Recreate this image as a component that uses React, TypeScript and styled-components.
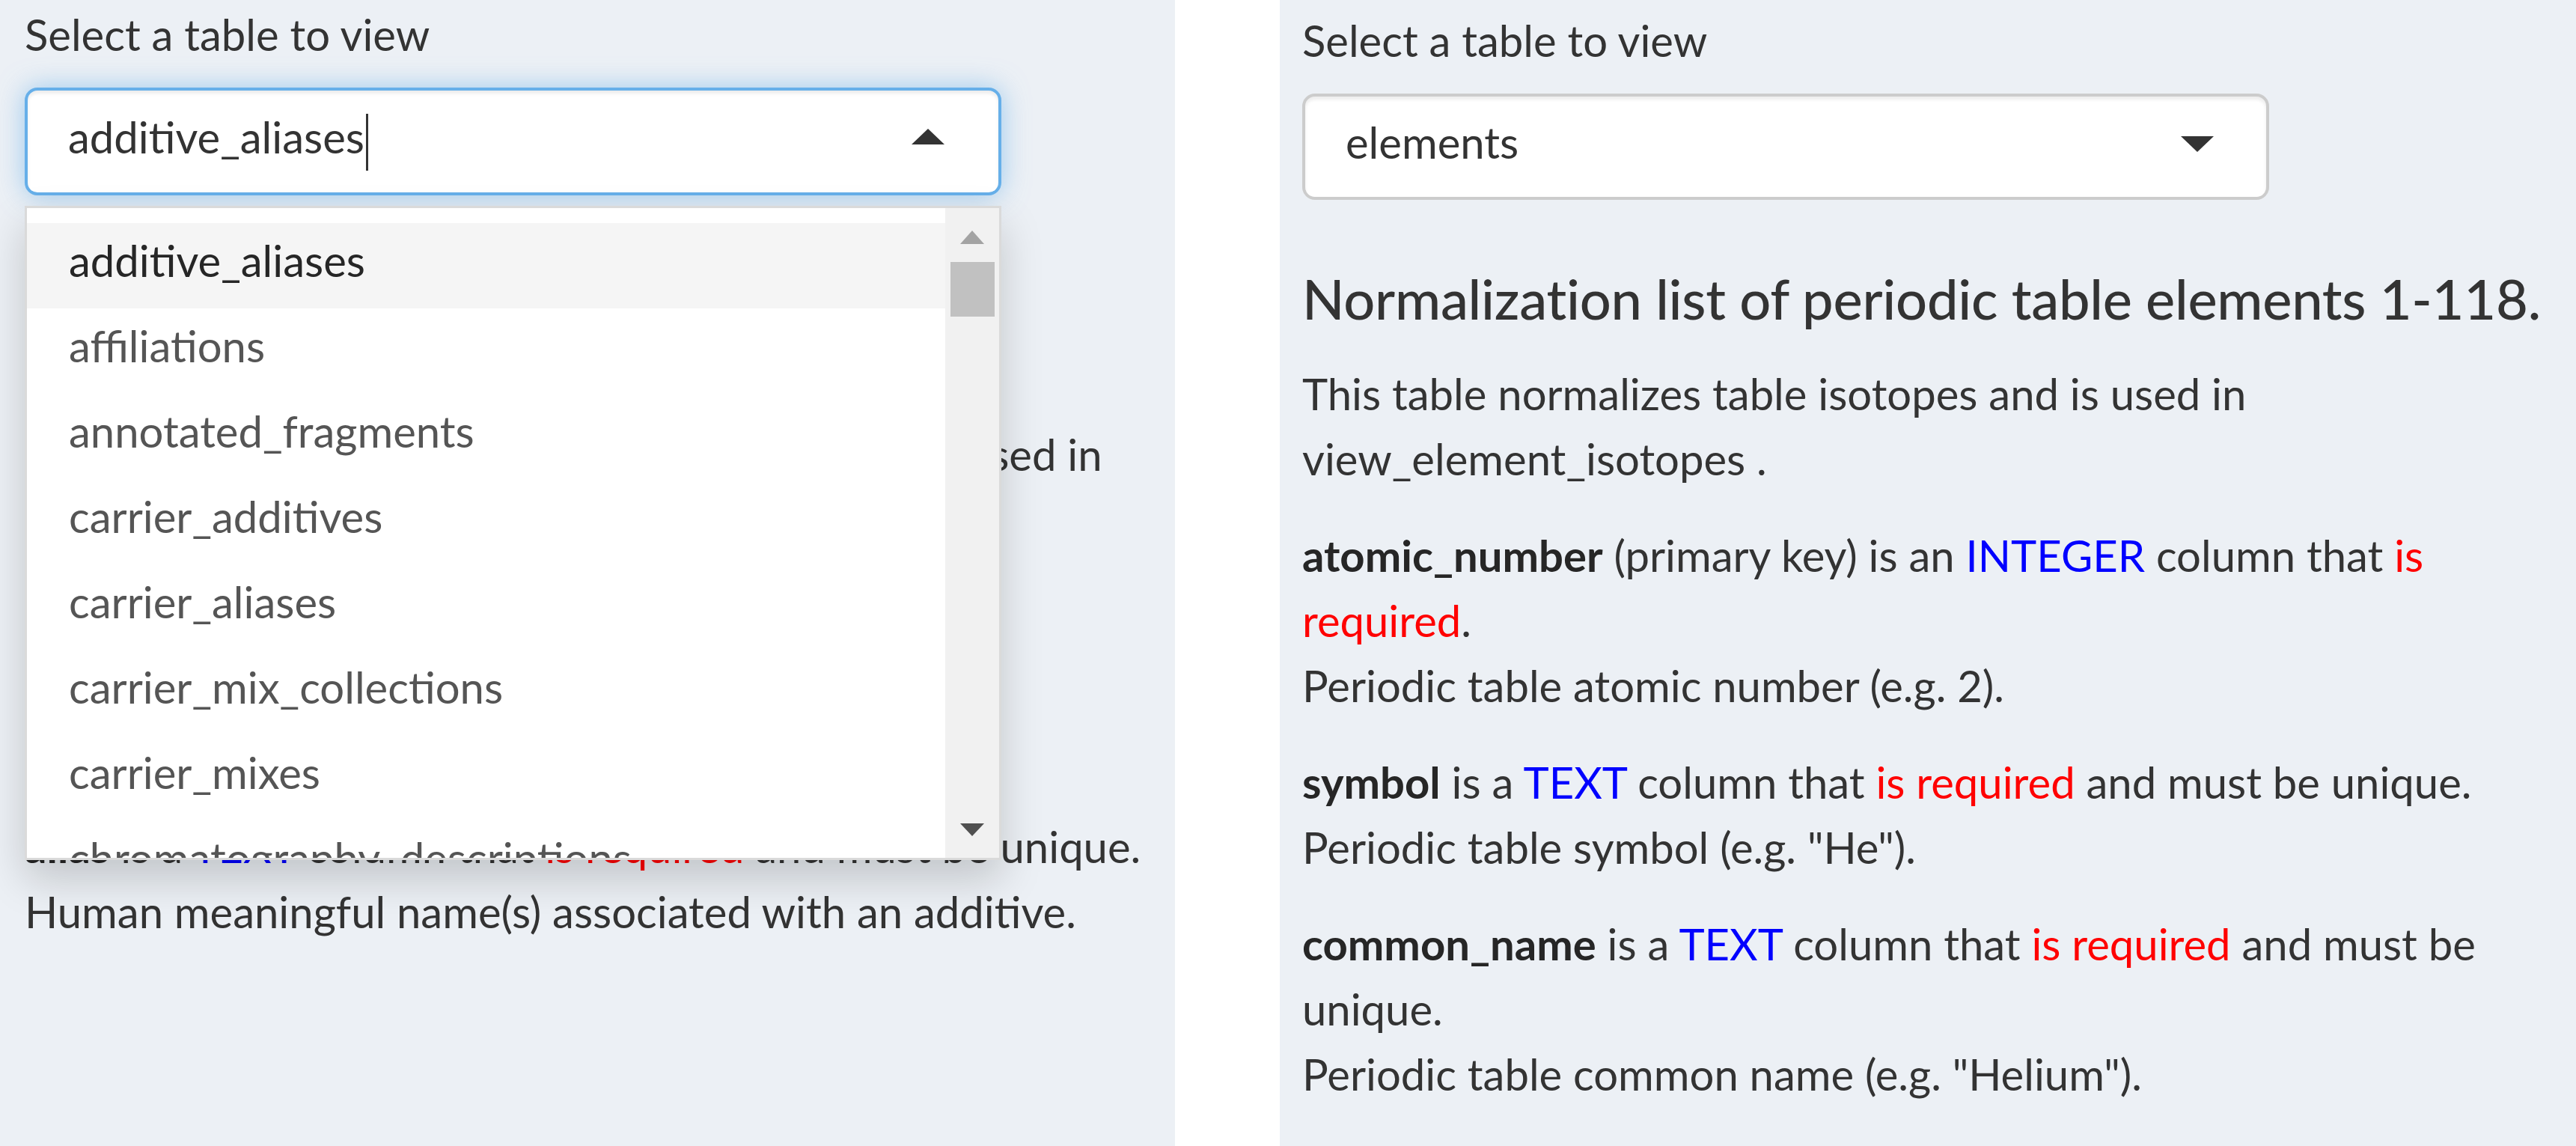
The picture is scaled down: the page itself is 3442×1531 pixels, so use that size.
import React from "react";
import styled, { createGlobalStyle, css } from "styled-components";

const GlobalStyle = createGlobalStyle`
  html, body {
    margin: 0;
    padding: 0;
    background: #ffffff;
  }
  body {
    font-family: Lato, "Open Sans", "Liberation Sans", sans-serif;
    color: #333333;
  }
  *, *::before, *::after { box-sizing: border-box; }
`;

const Page = styled.main`
  display: flex;
  width: 3442px;
  height: 1531px;
  overflow: hidden;
  background: #ffffff;
`;

const Panel = styled.section<{ $width?: number; $top: number; $left: number }>`
  flex: ${({ $width }) => ($width ? `0 0 ${$width}px` : "1 1 0")};
  min-width: 0;
  height: 100%;
  background: #ecf0f5;
  padding: ${({ $top, $left }) => `${$top}px 0 0 ${$left}px`};
  overflow: hidden;
`;

const Gutter = styled.div`
  flex: 0 0 140px;
  background: #ffffff;
`;

const Column = styled.div<{ $width: number }>`
  width: ${({ $width }) => $width}px;
  font-size: 58px;
  line-height: 87px;
`;

const FieldLabel = styled.label`
  display: block;
  font-size: 58px;
  line-height: 87px;
  font-weight: 400;
  color: #333333;
  margin-bottom: 28px;
`;

const SelectWrap = styled.div<{ $width: number }>`
  position: relative;
  width: ${({ $width }) => $width}px;
`;

const SelectBox = styled.div<{ $open?: boolean; $height: number; $padTop: number }>`
  position: relative;
  height: ${({ $height }) => $height}px;
  padding: ${({ $padTop }) => $padTop}px 0 0 54px;
  background: #ffffff;
  border: 4px solid ${({ $open }) => ($open ? "#66afe9" : "#cccccc")};
  border-radius: 17px;
  font-size: 58px;
  line-height: 87px;
  color: #333333;
  white-space: nowrap;
  box-shadow: ${({ $open }) =>
    $open
      ? "inset 0 4px 4px rgba(0,0,0,0.075), 0 0 35px rgba(102,175,233,0.6)"
      : "inset 0 4px 4px rgba(0,0,0,0.075)"};
`;

const TextCaret = styled.span`
  display: inline-block;
  width: 3px;
  height: 76px;
  margin-left: 2px;
  vertical-align: -23px;
  background: #333333;
`;

const Arrow = styled.span<{ $up?: boolean; $top: number; $right: number }>`
  position: absolute;
  top: ${({ $top }) => $top}px;
  right: ${({ $right }) => $right}px;
  width: 0;
  height: 0;
  border-left: 22px solid transparent;
  border-right: 22px solid transparent;
  ${({ $up }) =>
    $up
      ? css`border-bottom: 21px solid #333333;`
      : css`border-top: 21px solid #333333;`}
`;

const Dropdown = styled.div`
  position: absolute;
  top: calc(100% + 14px);
  left: 0;
  width: 100%;
  height: 874px;
  display: flex;
  background: #ffffff;
  border: 3px solid #dadada;
  box-shadow: 0 26px 52px rgba(0, 0, 0, 0.175);
  z-index: 10;
`;

const OptionList = styled.ul`
  flex: 1 1 auto;
  min-width: 0;
  margin: 0;
  padding: 20px 0 0;
  list-style: none;
  overflow: hidden;
`;

const Option = styled.li<{ $active?: boolean }>`
  height: 114px;
  padding: 6px 0 0 56px;
  font-size: 58px;
  line-height: 87px;
  white-space: nowrap;
  color: ${({ $active }) => ($active ? "#262626" : "#555555")};
  background: ${({ $active }) => ($active ? "#f5f5f5" : "#ffffff")};
`;

const ScrollTrack = styled.div`
  flex: 0 0 72px;
  display: flex;
  flex-direction: column;
  align-items: center;
  padding: 30px 0 29px;
  background: #f1f1f1;
`;

const ScrollButton = styled.span<{ $dir: "up" | "down"; $color: string }>`
  flex: 0 0 auto;
  width: 0;
  height: 0;
  border-left: 16px solid transparent;
  border-right: 16px solid transparent;
  ${({ $dir, $color }) =>
    $dir === "up"
      ? css`border-bottom: 18px solid ${$color};`
      : css`border-top: 17px solid ${$color};`}
`;

const ScrollThumb = styled.span`
  flex: 0 0 73px;
  width: 59px;
  margin-top: 24px;
  background: #c1c1c1;
`;

const ScrollSpacer = styled.span`
  flex: 1 1 auto;
`;

const Heading = styled.h4`
  margin: 88px 0 40px;
  font-size: 74px;
  line-height: 87px;
  font-weight: 500;
  letter-spacing: -0.25px;
  color: #333333;
`;

const Para = styled.p<{ $after?: number }>`
  margin: 0 0 ${({ $after }) => $after ?? 42}px;
  font-size: 58px;
  line-height: 87px;
  color: #333333;
`;

const ColName = styled.b`
  font-weight: 700;
  color: #262626;
`;

const TypeName = styled.span`
  color: #0000ff;
`;

const Required = styled.span`
  color: #ff0000;
`;

const tables = [
  "additive_aliases",
  "affiliations",
  "annotated_fragments",
  "carrier_additives",
  "carrier_aliases",
  "carrier_mix_collections",
  "carrier_mixes",
  "chromatography_descriptions",
  "compound_aliases",
];

export default function App() {
  return (
    <>
      <GlobalStyle />
      <Page>
        <Panel $width={1570} $top={2} $left={33}>
          <Column $width={1530}>
            <FieldLabel>Select a table to view</FieldLabel>
            <SelectWrap $width={1305}>
              <SelectBox $open $height={144} $padTop={18}>
                additive_aliases
                <TextCaret />
                <Arrow $up $top={51} $right={72} />
              </SelectBox>
              <Dropdown>
                <OptionList>
                  {tables.map((t, i) => (
                    <Option key={t} $active={i === 0}>
                      {t}
                    </Option>
                  ))}
                </OptionList>
                <ScrollTrack>
                  <ScrollButton $dir="up" $color="#a3a3a3" />
                  <ScrollThumb />
                  <ScrollSpacer />
                  <ScrollButton $dir="down" $color="#505050" />
                </ScrollTrack>
              </Dropdown>
            </SelectWrap>
            <Heading>
              Alternate names for additives,
              <br />
              one alias per additive name.
            </Heading>
            <Para>
              This table links all aliases to table additives and is used in view_additive_aliases .
            </Para>
            <Para $after={47}>
              <ColName>id</ColName> is an <TypeName>INTEGER</TypeName> column that{" "}
              <Required>is required</Required>.
              <br />
              Automatically assigned primary key
              <br />
              for each alias.
            </Para>
            <Para>
              <ColName>alias</ColName> is a <TypeName>TEXT</TypeName> column that{" "}
              <Required>is required</Required> and must be unique.
              <br />
              Human meaningful name(s) associated with an additive.
            </Para>
          </Column>
        </Panel>
        <Gutter />
        <Panel $top={10} $left={30}>
          <Column $width={1702}>
            <FieldLabel>Select a table to view</FieldLabel>
            <SelectWrap $width={1292}>
              <SelectBox $height={142} $padTop={17}>
                elements
                <Arrow $top={53} $right={70} />
              </SelectBox>
            </SelectWrap>
            <Heading>Normalization list of periodic table elements 1-118.</Heading>
            <Para>This table normalizes table isotopes and is used in view_element_isotopes .</Para>
            <Para>
              <ColName>atomic_number</ColName> (primary key) is an <TypeName>INTEGER</TypeName> column
              that <Required>is required</Required>.
              <br />
              Periodic table atomic number (e.g. 2).
            </Para>
            <Para>
              <ColName>symbol</ColName> is a <TypeName>TEXT</TypeName> column that{" "}
              <Required>is required</Required> and must be unique.
              <br />
              Periodic table symbol (e.g. "He").
            </Para>
            <Para>
              <ColName>common_name</ColName> is a <TypeName>TEXT</TypeName> column that{" "}
              <Required>is required</Required> and must be unique.
              <br />
              Periodic table common name (e.g. "Helium").
            </Para>
          </Column>
        </Panel>
      </Page>
    </>
  );
}
